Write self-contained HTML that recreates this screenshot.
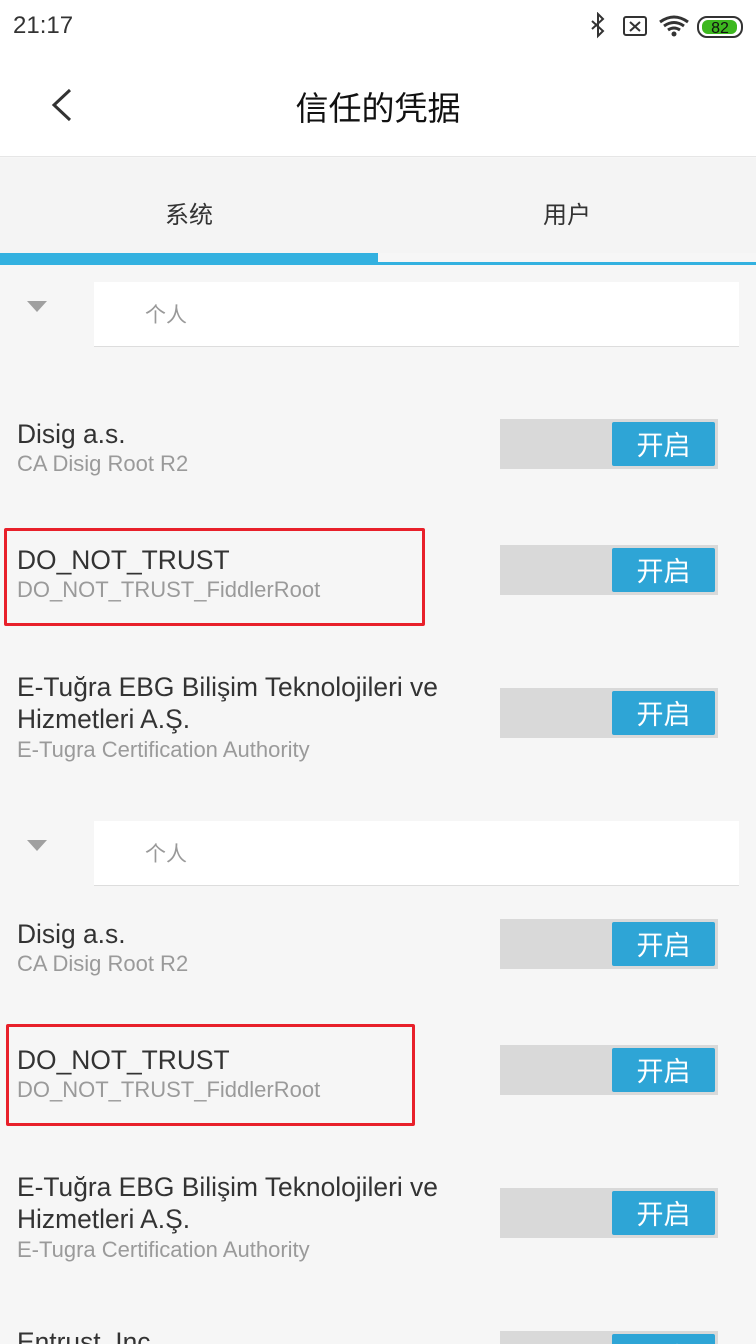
<!DOCTYPE html>
<html style="width:756px;height:1344px;overflow:hidden"><head><meta charset="utf-8"><style>
*{margin:0;padding:0;box-sizing:border-box}
body{width:756px;height:1344px;overflow:hidden;background:#f6f6f6;position:relative;font-family:"Liberation Sans","Noto Sans CJK SC",sans-serif}
.a{position:absolute;white-space:nowrap}
.t{font-size:26.4px;color:#333;line-height:30px}
.s{font-size:22px;color:#9a9a9a;line-height:26px}
.tg{position:absolute;left:500px;width:218px;height:50px;background:#d9d9d9;overflow:hidden}
.tg b{position:absolute;left:112px;top:3px;width:103px;height:44px;background:#2ea5d6;border-radius:2px;color:#fff;font-weight:normal;font-size:27px;text-align:center;line-height:44px;font-family:"Noto Sans CJK SC",sans-serif}
.hd{position:absolute;left:94px;width:645px;height:65px;background:#fff;border-bottom:1px solid #ddd}
.hd span{position:absolute;left:51px;top:17px;font-size:21px;color:#999;font-family:"Noto Sans CJK SC",sans-serif}
.tri{position:absolute;left:27px;width:0;height:0;border-left:10px solid transparent;border-right:10px solid transparent;border-top:11px solid #a0a0a0}
.red{position:absolute;border:3px solid #e8202a;border-radius:2px}
</style></head><body>
<div class="a" style="left:0;top:0;width:756px;height:157px;background:#fff;border-bottom:1px solid #e6e6e6"></div>
<div class="a" style="left:13px;top:12px;font-size:24px;color:#333">21:17</div>
<svg class="a" style="left:586px;top:12px" width="160" height="28" viewBox="0 0 160 28">
<path d="M6 9 L17 19 L12 24 L12 2 L17 7 L6 17" fill="none" stroke="#333" stroke-width="2"/>
<rect x="38" y="5" width="22" height="18" rx="2" fill="none" stroke="#333" stroke-width="2"/>
<path d="M44 10 L54 19 M54 10 L44 19" stroke="#333" stroke-width="2"/>
<path d="M74 10 Q88 0 102 10 M78 14 Q88 7 98 14 M82 18 Q88 14 94 18" fill="none" stroke="#333" stroke-width="3"/>
<circle cx="88" cy="22" r="2.5" fill="#333"/>
<rect x="112" y="5" width="44" height="20" rx="9" fill="none" stroke="#333" stroke-width="2"/>
<rect x="116" y="8" width="35" height="14" rx="6" fill="#3db81f"/>
<text x="134" y="21" font-size="16" text-anchor="middle" font-family="Liberation Sans" fill="#111">82</text>
</svg>
<svg class="a" style="left:50px;top:88px" width="22" height="34"><path d="M20 2 L4 17 L20 32" fill="none" stroke="#333" stroke-width="3"/></svg>
<div class="a" style="left:0;width:756px;top:84px;text-align:center;font-size:33px;color:#111;font-family:'Noto Sans CJK SC',sans-serif;line-height:44px">信任的凭据</div>
<div class="a" style="left:0;top:158px;width:756px;height:95px;background:#f4f4f4"></div>
<div class="a" style="left:0;width:378px;top:195px;text-align:center;font-size:24px;color:#333;font-family:'Noto Sans CJK SC',sans-serif">系统</div>
<div class="a" style="left:378px;width:378px;top:195px;text-align:center;font-size:24px;color:#333;font-family:'Noto Sans CJK SC',sans-serif">用户</div>
<div class="a" style="left:0;top:253px;width:378px;height:12px;background:#33b1e0"></div>
<div class="a" style="left:378px;top:262px;width:378px;height:3px;background:#33b1e0"></div>

<div class="tri" style="top:301px"></div>
<div class="hd" style="top:282px"><span>个人</span></div>
<div class="a t" style="left:17px;top:419px">Disig a.s.</div>
<div class="a s" style="left:17px;top:451px">CA Disig Root R2</div>
<div class="tg" style="top:419px"><b>开启</b></div>
<div class="red" style="left:4px;top:528px;width:421px;height:98px"></div>
<div class="a t" style="left:17px;top:545px">DO_NOT_TRUST</div>
<div class="a s" style="left:17px;top:577px">DO_NOT_TRUST_FiddlerRoot</div>
<div class="tg" style="top:545px"><b>开启</b></div>
<div class="a t" style="left:17px;top:672px">E-Tuğra EBG Bilişim Teknolojileri ve</div>
<div class="a t" style="left:17px;top:704px">Hizmetleri A.Ş.</div>
<div class="a s" style="left:17px;top:737px">E-Tugra Certification Authority</div>
<div class="tg" style="top:688px"><b>开启</b></div>

<div class="tri" style="top:840px"></div>
<div class="hd" style="top:821px"><span>个人</span></div>
<div class="a t" style="left:17px;top:919px">Disig a.s.</div>
<div class="a s" style="left:17px;top:951px">CA Disig Root R2</div>
<div class="tg" style="top:919px"><b>开启</b></div>
<div class="red" style="left:6px;top:1024px;width:409px;height:102px"></div>
<div class="a t" style="left:17px;top:1045px">DO_NOT_TRUST</div>
<div class="a s" style="left:17px;top:1077px">DO_NOT_TRUST_FiddlerRoot</div>
<div class="tg" style="top:1045px"><b>开启</b></div>
<div class="a t" style="left:17px;top:1172px">E-Tuğra EBG Bilişim Teknolojileri ve</div>
<div class="a t" style="left:17px;top:1204px">Hizmetleri A.Ş.</div>
<div class="a s" style="left:17px;top:1237px">E-Tugra Certification Authority</div>
<div class="tg" style="top:1188px"><b>开启</b></div>
<div class="a t" style="left:17px;top:1327px">Entrust, Inc.</div>
<div class="tg" style="top:1331px;height:13px"><b>开启</b></div>
</body></html>
